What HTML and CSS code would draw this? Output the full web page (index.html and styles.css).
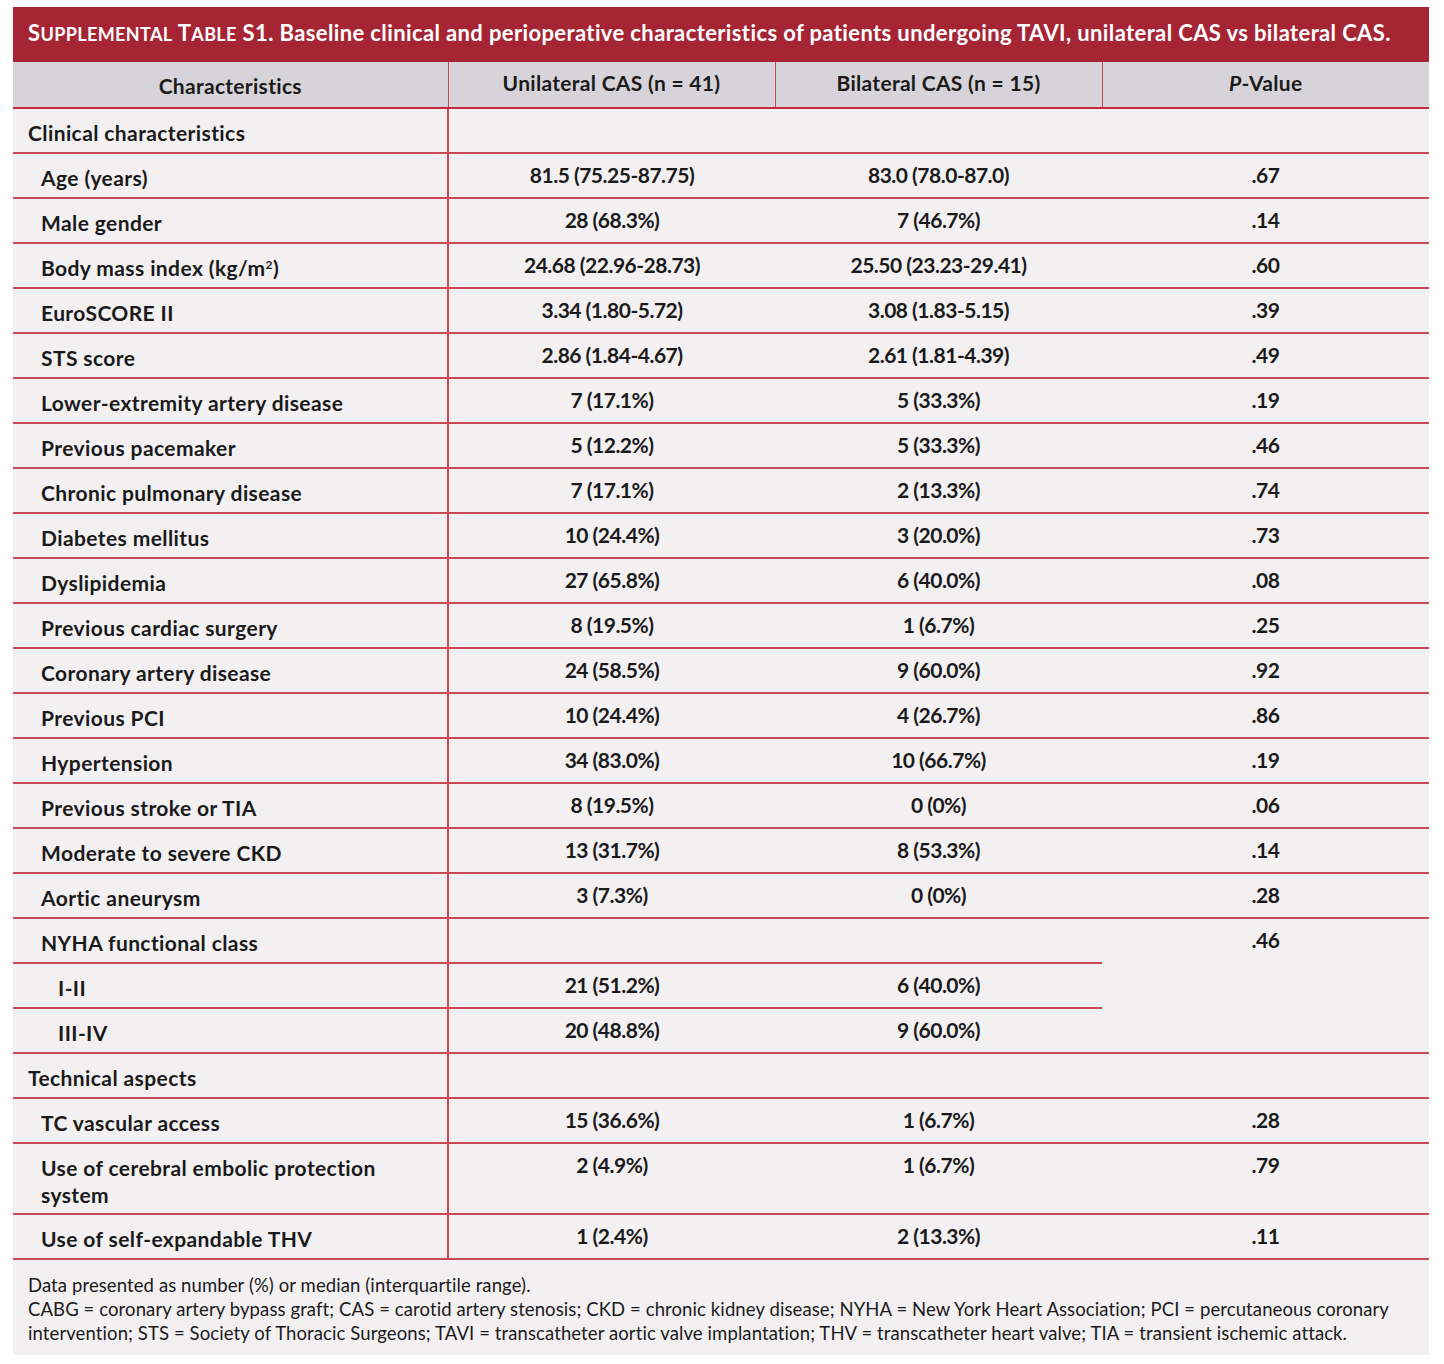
FILE: index.html
```html
<!DOCTYPE html>
<html lang="en">
<head>
<meta charset="utf-8">
<title>Supplemental Table S1</title>
<link rel="stylesheet" href="styles.css">
</head>
<body>
<div class="sheet">
  <div class="caption">S<span class="sc">UPPLEMENTAL</span> T<span class="sc">ABLE</span> S1. Baseline clinical and perioperative characteristics of patients undergoing TAVI, unilateral CAS vs bilateral CAS.</div>
  <table class="tbl">
    <colgroup>
      <col class="c1"><col class="c2"><col class="c3"><col class="c4">
    </colgroup>
    <thead>
      <tr>
        <th class="h-first">Characteristics</th>
        <th>Unilateral CAS (n = 41)</th>
        <th>Bilateral CAS (n = 15)</th>
        <th><i>P</i>-Value</th>
      </tr>
    </thead>
    <tbody>
      <tr class="sec"><td class="lab l0">Clinical characteristics</td><td colspan="3"></td></tr>
      <tr><td class="lab l1">Age (years)</td><td>81.5 (75.25-87.75)</td><td>83.0 (78.0-87.0)</td><td>.67</td></tr>
      <tr><td class="lab l1">Male gender</td><td>28 (68.3%)</td><td>7 (46.7%)</td><td>.14</td></tr>
      <tr><td class="lab l1">Body mass index (kg/m<sup>2</sup>)</td><td>24.68 (22.96-28.73)</td><td>25.50 (23.23-29.41)</td><td>.60</td></tr>
      <tr><td class="lab l1">EuroSCORE II</td><td>3.34 (1.80-5.72)</td><td>3.08 (1.83-5.15)</td><td>.39</td></tr>
      <tr><td class="lab l1">STS score</td><td>2.86 (1.84-4.67)</td><td>2.61 (1.81-4.39)</td><td>.49</td></tr>
      <tr><td class="lab l1">Lower-extremity artery disease</td><td>7 (17.1%)</td><td>5 (33.3%)</td><td>.19</td></tr>
      <tr><td class="lab l1">Previous pacemaker</td><td>5 (12.2%)</td><td>5 (33.3%)</td><td>.46</td></tr>
      <tr><td class="lab l1">Chronic pulmonary disease</td><td>7 (17.1%)</td><td>2 (13.3%)</td><td>.74</td></tr>
      <tr><td class="lab l1">Diabetes mellitus</td><td>10 (24.4%)</td><td>3 (20.0%)</td><td>.73</td></tr>
      <tr><td class="lab l1">Dyslipidemia</td><td>27 (65.8%)</td><td>6 (40.0%)</td><td>.08</td></tr>
      <tr><td class="lab l1">Previous cardiac surgery</td><td>8 (19.5%)</td><td>1 (6.7%)</td><td>.25</td></tr>
      <tr><td class="lab l1">Coronary artery disease</td><td>24 (58.5%)</td><td>9 (60.0%)</td><td>.92</td></tr>
      <tr><td class="lab l1">Previous PCI</td><td>10 (24.4%)</td><td>4 (26.7%)</td><td>.86</td></tr>
      <tr><td class="lab l1">Hypertension</td><td>34 (83.0%)</td><td>10 (66.7%)</td><td>.19</td></tr>
      <tr><td class="lab l1">Previous stroke or TIA</td><td>8 (19.5%)</td><td>0 (0%)</td><td>.06</td></tr>
      <tr><td class="lab l1">Moderate to severe CKD</td><td>13 (31.7%)</td><td>8 (53.3%)</td><td>.14</td></tr>
      <tr><td class="lab l1">Aortic aneurysm</td><td>3 (7.3%)</td><td>0 (0%)</td><td>.28</td></tr>
      <tr><td class="lab l1">NYHA functional class</td><td></td><td></td><td rowspan="3">.46</td></tr>
      <tr><td class="lab l2">I-II</td><td>21 (51.2%)</td><td>6 (40.0%)</td></tr>
      <tr><td class="lab l2">III-IV</td><td>20 (48.8%)</td><td>9 (60.0%)</td></tr>
      <tr class="sec"><td class="lab l0">Technical aspects</td><td colspan="3"></td></tr>
      <tr><td class="lab l1">TC vascular access</td><td>15 (36.6%)</td><td>1 (6.7%)</td><td>.28</td></tr>
      <tr class="tall"><td class="lab l1">Use of cerebral embolic protection system</td><td>2 (4.9%)</td><td>1 (6.7%)</td><td>.79</td></tr>
      <tr><td class="lab l1">Use of self-expandable THV</td><td>1 (2.4%)</td><td>2 (13.3%)</td><td>.11</td></tr>
    </tbody>
  </table>
  <div class="notes">
    <p>Data presented as number (%) or median (interquartile range).</p>
    <p>CABG = coronary artery bypass graft; CAS = carotid artery stenosis; CKD = chronic kidney disease; NYHA = New York Heart Association; PCI = percutaneous coronary intervention; STS = Society of Thoracic Surgeons; TAVI = transcatheter aortic valve implantation; THV = transcatheter heart valve; TIA = transient ischemic attack.</p>
  </div>
</div>
</body>
</html>
```

FILE: styles.css
```css
* { box-sizing: border-box; }

body {
  margin: 0;
  background: #ffffff;
  font-family: Lato, "Liberation Sans", sans-serif;
  color: #1b1a1b;
}

.sheet {
  width: 1416px;
  margin: 7px 0 0 13px;
  background: #f2f0f1;
}

.caption {
  height: 55px;
  background: #a62535;
  color: #ffffff;
  font-weight: 700;
  font-size: 22px;
  letter-spacing: 0.38px;
  padding: 13px 0 0 15px;
  line-height: 26px;
  white-space: nowrap;
}

.sc { font-size: 18px; }

.tbl {
  width: 1416px;
  table-layout: fixed;
  border-collapse: collapse;
  font-size: 21px;
  font-weight: 700;
}

.c1 { width: 435px; }
.c2, .c3, .c4 { width: 327px; }

.tbl th {
  height: 46px;
  background: #d6d4d8;
  font-weight: 700;
  text-align: center;
  vertical-align: top;
  padding: 8px 0 0 0;
  line-height: 26px;
  letter-spacing: 0.3px;
  border-left: 1px solid #c9404e;
  border-bottom: 2px solid #c42a3c;
}
.tbl th:first-child { border-left: none; padding-top: 11px; }
.tbl th i { font-style: italic; }

.tbl td {
  height: 45px;
  text-align: center;
  vertical-align: top;
  padding: 8px 0 0 0;
  line-height: 26px;
  letter-spacing: -0.5px;
  border-bottom: 2px solid #cc4a57;
}

.tbl td.lab {
  text-align: left;
  padding-top: 10px;
  line-height: 27px;
  letter-spacing: 0.4px;
  border-right: 2px solid #cc4a57;
}

.tbl td.l0 { padding-left: 15px; }
.tbl td.l1 { padding-left: 28px; padding-right: 50px; }
.tbl td.l2 { padding-left: 45px; }

.tall td { height: 71px; }

sup { font-size: 12px; vertical-align: top; position: relative; top: -3px; }

.notes {
  padding: 13px 10px 10px 15px;
  font-size: 18.5px;
  font-weight: 400;
  letter-spacing: 0.1px;
  line-height: 24px;
}
.notes p { margin: 0; }
```
